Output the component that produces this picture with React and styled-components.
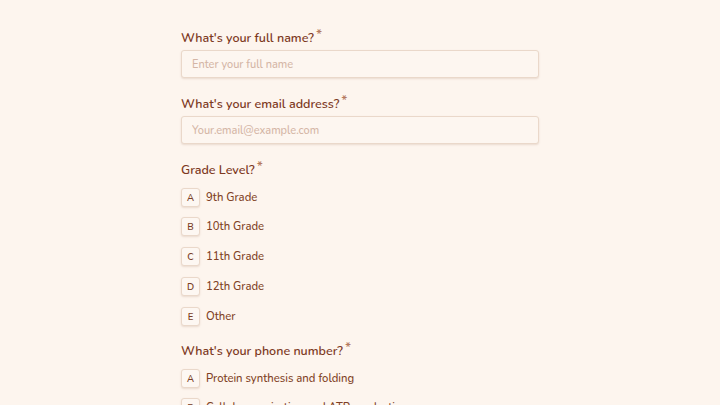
import React from "react";
import styled, { createGlobalStyle } from "styled-components";

const Global = createGlobalStyle`
  html, body { margin: 0; padding: 0; background: #fdf5ee; }
  body { font-family: Nunito, Lato, "Noto Sans", sans-serif; }
`;

const Page = styled.div`
  width: 720px;
  height: 405px;
  overflow: hidden;
  display: flex;
  justify-content: center;
  background: #fdf5ee;
`;

const Form = styled.div`
  width: 358px;
  padding-top: 28px;
  display: flex;
  flex-direction: column;
`;

const Field = styled.div`
  display: flex;
  flex-direction: column;
  margin-bottom: 16px;
`;

const Label = styled.div`
  height: 20px;
  line-height: 20px;
  font-size: 12.5px;
  font-weight: 600;
  color: #7d3a1f;
  margin-bottom: ${(p) => (p.$tight ? "2px" : "8px")};
  display: flex;
  align-items: flex-start;
`;

const Star = styled.span`
  font-size: 13.5px;
  line-height: 13px;
  font-weight: 600;
  color: #b57a60;
  margin-left: 2px;
`;

const Input = styled.input`
  box-sizing: border-box;
  height: 28px;
  width: 100%;
  border: 1px solid #ead8ca;
  border-radius: 3px;
  background: #fdf6f0;
  box-shadow: 0 1px 2px rgba(150, 100, 70, 0.18);
  padding: 0 10px;
  font-family: inherit;
  font-size: 11px;
  font-weight: 500;
  color: #7a3e26;
  outline: none;
  &::placeholder { color: #d4b5a5; }
`;

const Options = styled.div`
  display: flex;
  flex-direction: column;
  gap: 11.8px;
`;

const Option = styled.div`
  display: flex;
  align-items: center;
  gap: 6px;
  height: 18px;
`;

const Key = styled.span`
  box-sizing: border-box;
  width: 19px;
  height: 19px;
  border: 1px solid #ead8ca;
  border-radius: 3px;
  background: #fdf7f2;
  box-shadow: 0 1px 2px rgba(150, 100, 70, 0.18);
  display: flex;
  align-items: center;
  justify-content: center;
  font-size: 9.5px;
  font-weight: 600;
  color: #7a3e26;
`;

const OptText = styled.span`
  font-size: 11.3px;
  font-weight: 500;
  color: #7f3f24;
`;

const Q = ({ children, tight }) => (
  <Label $tight={tight}>
    {children}
    <Star>*</Star>
  </Label>
);

const grades = ["9th Grade", "10th Grade", "11th Grade", "12th Grade", "Other"];
const phone = ["Protein synthesis and folding", "Cellular respiration and ATP production"];
const letters = "ABCDE";

export default function App() {
  return (
    <>
      <Global />
      <Page>
        <Form>
          <Field>
            <Q tight>What's your full name?</Q>
            <Input placeholder="Enter your full name" />
          </Field>
          <Field>
            <Q tight>What's your email address?</Q>
            <Input placeholder="Your.email@example.com" />
          </Field>
          <Field>
            <Q>Grade Level?</Q>
            <Options>
              {grades.map((g, i) => (
                <Option key={g}>
                  <Key>{letters[i]}</Key>
                  <OptText>{g}</OptText>
                </Option>
              ))}
            </Options>
          </Field>
          <Field>
            <Q>What's your phone number?</Q>
            <Options>
              {phone.map((g, i) => (
                <Option key={g}>
                  <Key>{letters[i]}</Key>
                  <OptText>{g}</OptText>
                </Option>
              ))}
            </Options>
          </Field>
        </Form>
      </Page>
    </>
  );
}
